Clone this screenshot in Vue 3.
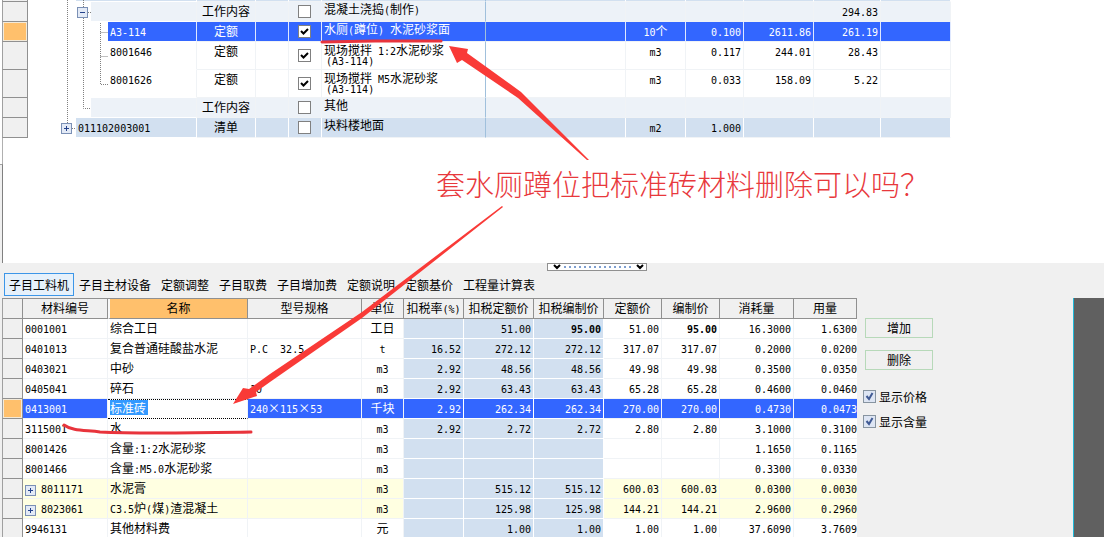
<script setup>
const upperRows = [
  { kind: 'work', indent: 'l2', code: '', type: '工作内容', checked: false, name: '混凝土浇捣(制作)', unit: '', qty: '', price: '', total: '294.83' },
  { kind: 'selected', indent: 'l3', code: 'A3-114', type: '定额', checked: true, name: '水厕(蹲位) 水泥砂浆面', unit: '10个', qty: '0.100', price: '2611.86', total: '261.19' },
  { kind: 'plain tall', indent: 'l3', code: '8001646', type: '定额', checked: true, name: '现场搅拌 1:2水泥砂浆', note: '(A3-114)', unit: 'm3', qty: '0.117', price: '244.01', total: '28.43' },
  { kind: 'plain tall', indent: 'l3', code: '8001626', type: '定额', checked: true, name: '现场搅拌 M5水泥砂浆', note: '(A3-114)', unit: 'm3', qty: '0.033', price: '158.09', total: '5.22' },
  { kind: 'work', indent: 'l2', code: '', type: '工作内容', checked: false, name: '其他', unit: '', qty: '', price: '', total: '' },
  { kind: 'list', indent: 'l1', code: '011102003001', type: '清单', checked: false, name: '块料楼地面', unit: 'm2', qty: '1.000', price: '', total: '' },
]

const tabs = ['子目工料机', '子目主材设备', '定额调整', '子目取费', '子目增加费', '定额说明', '定额基价', '工程量计算表']

const heads = ['材料编号', '名称', '型号规格', '单位', '扣税率(%)', '扣税定额价', '扣税编制价', '定额价', '编制价', '消耗量', '用量']

const lowerRows = [
  { v: ['0001001', '综合工日', '', '工日', '', '51.00', '95.00', '51.00', '95.00', '16.3000', '1.6300'], strong: true },
  { v: ['0401013', '复合普通硅酸盐水泥', 'P.C  32.5', 't', '16.52', '272.12', '272.12', '317.07', '317.07', '0.2000', '0.0200'] },
  { v: ['0403021', '中砂', '', 'm3', '2.92', '48.56', '48.56', '49.98', '49.98', '0.3500', '0.0350'] },
  { v: ['0405041', '碎石', '10', 'm3', '2.92', '63.43', '63.43', '65.28', '65.28', '0.4600', '0.0460'] },
  { v: ['0413001', '标准砖', '240×115×53', '千块', '2.92', '262.34', '262.34', '270.00', '270.00', '0.4730', '0.0473'], selected: true },
  { v: ['3115001', '水', '', 'm3', '2.92', '2.72', '2.72', '2.80', '2.80', '3.1000', '0.3100'] },
  { v: ['8001426', '含量:1:2水泥砂浆', '', 'm3', '', '', '', '', '', '1.1650', '0.1165'] },
  { v: ['8001466', '含量:M5.0水泥砂浆', '', 'm3', '', '', '', '', '', '0.3300', '0.0330'] },
  { v: ['8011171', '水泥膏', '', 'm3', '', '515.12', '515.12', '600.03', '600.03', '0.0300', '0.0030'], group: true },
  { v: ['8023061', 'C3.5炉(煤)渣混凝土', '', 'm3', '', '125.98', '125.98', '144.21', '144.21', '2.9600', '0.2960'], group: true },
  { v: ['9946131', '其他材料费', '', '元', '', '1.00', '1.00', '1.00', '1.00', '37.6090', '3.7609'] },
]

const alignment = (i) => (i < 3 ? 'left' : i === 3 ? 'center' : 'right')

// Splits a label into half-width and full-width runs so each gets its own size.
const runs = (text) =>
  (text.match(/[\x20-\x7e]+|[^\x20-\x7e]+/g) || []).map((s) => ({ s, half: /^[\x20-\x7e]/.test(s) }))
</script>

<template>
  <main class="app">
    <section class="upper">
      <table class="grid bill" aria-label="清单定额">
        <colgroup>
          <col class="b-gut" /><col class="b-code" /><col class="b-type" /><col class="b-gap" /><col class="b-tick" />
          <col class="b-name" /><col class="b-desc" /><col class="b-unit" /><col class="b-qty" /><col class="b-price" />
          <col class="b-total" /><col class="b-last" />
        </colgroup>
        <tbody>
          <tr class="sliver list">
            <td class="gutter"></td>
            <td class="tree l1"><div class="code"></div></td>
            <td v-for="n in 10" :key="n"></td>
          </tr>
          <tr v-for="(r, i) in upperRows" :key="i" :class="r.kind">
            <td class="gutter"><i></i></td>
            <td class="tree" :class="r.indent"><div class="code"><span class="h">{{ r.code }}</span></div></td>
            <td class="center">{{ r.type }}</td>
            <td></td>
            <td class="tick"><input type="checkbox" :checked="r.checked" :aria-label="'选用 ' + r.name" /></td>
            <td class="name">
              <span v-for="(p, k) in runs(r.name)" :key="k" :class="{ h: p.half }">{{ p.s }}</span>
              <div v-if="r.note" class="note h">{{ r.note }}</div>
            </td>
            <td></td>
            <td class="center"><span v-for="(p, k) in runs(r.unit)" :key="k" :class="{ h: p.half }">{{ p.s }}</span></td>
            <td class="right"><span class="h">{{ r.qty }}</span></td>
            <td class="right"><span class="h">{{ r.price }}</span></td>
            <td class="right"><span class="h">{{ r.total }}</span></td>
            <td></td>
          </tr>
        </tbody>
      </table>
      <div class="stub"></div>
      <div class="wall"></div>
      <svg class="branches" width="110" height="140" viewBox="0 0 110 140" aria-hidden="true">
        <g fill="none" stroke="#808080" stroke-dasharray="1 1">
          <path d="M67.5 0V123M83.5 0V7M83.5 18V108.500H91M88 12.500H91M100.500 23V84.500H108M100.500 32.500H108M100.500 56.500H108M72 128.500H76" />
        </g>
        <g transform="translate(77 7)">
          <rect x=".5" y=".5" width="10" height="10" fill="#e3eaf6" stroke="#7b90b5" />
          <path d="M3 5.500H8" stroke="#24428b" />
        </g>
        <g transform="translate(61 123)">
          <rect x=".5" y=".5" width="10" height="10" fill="#e3eaf6" stroke="#7b90b5" />
          <path d="M3 5.500H8M5.500 3V8" stroke="#24428b" />
        </g>
      </svg>
    </section>

    <section class="lower">
      <button class="splitter" type="button" aria-label="折叠面板">
        <svg width="98" height="6" viewBox="0 0 98 6" aria-hidden="true">
          <path d="M6 1l3 3 3-3M89 1l3 3 3-3" fill="none" stroke="#000" stroke-width="2" />
          <path d="M16 3H84" stroke="#7f9fd0" stroke-width="2" stroke-dasharray="2 3" />
        </svg>
      </button>
      <nav class="tabs">
        <button v-for="(t, i) in tabs" :key="t" type="button" :class="{ on: i === 0 }">{{ t }}</button>
      </nav>
      <div class="body">
        <table class="grid parts">
          <colgroup>
            <col class="p-gut" /><col class="p-code" /><col class="p-name" /><col class="p-spec" /><col class="p-unit" />
            <col class="p-rate" /><col class="p-tax" /><col class="p-tax" /><col class="p-price" /><col class="p-price" />
            <col class="p-use" /><col class="p-amt" />
          </colgroup>
          <thead>
            <tr>
              <th class="gutter"></th>
              <th v-for="(t, i) in heads" :key="t" :class="{ hot: i === 1 }">
                <span v-for="(p, k) in runs(t)" :key="k" :class="{ h: p.half }">{{ p.s }}</span>
              </th>
            </tr>
          </thead>
          <tbody>
            <tr v-for="r in lowerRows" :key="r.v[0]" :class="{ selected: r.selected, group: r.group }">
              <td class="gutter"><i></i></td>
              <td
                v-for="(c, i) in r.v"
                :key="i"
                :class="[alignment(i), { tax: i > 3 && i < 7, strong: r.strong && (i === 6 || i === 8), edit: r.selected && i === 1 }]"
              >
                <svg v-if="r.group && i === 0" class="plus" width="11" height="11" viewBox="0 0 11 11" aria-hidden="true">
                  <rect x=".5" y=".5" width="10" height="10" fill="#e3eaf6" stroke="#7b90b5" />
                  <path d="M3 5.500H8M5.500 3V8" stroke="#24428b" />
                </svg>
                <mark v-if="r.selected && i === 1">{{ c }}</mark>
                <template v-else><span v-for="(p, k) in runs(c)" :key="k" :class="{ h: p.half }">{{ p.s }}</span></template>
              </td>
            </tr>
          </tbody>
        </table>
        <aside class="side">
          <button type="button">增加</button>
          <button type="button">删除</button>
          <label><input type="checkbox" checked />显示价格</label>
          <label><input type="checkbox" checked />显示含量</label>
        </aside>
        <div class="rail"></div>
      </div>
    </section>

    <p class="question">套水厕蹲位把标准砖材料删除可以吗？</p>
    <svg class="marks" width="620" height="450" viewBox="0 0 620 450" aria-hidden="true">
      <g fill="#f93a37">
        <path d="M449 46L468 49L467 53L521 92L589 160L587 160L518 98L462 60L457 63Z" />
        <path d="M502 206L503 207L362 318L270 382L256 392L257 396L233 404L243 388L249 389L270 374L362 312Z" />
      </g>
      <g fill="none" stroke="#e8343c" stroke-linecap="round" stroke-linejoin="round">
        <path d="M322 42L375 41L441 41" stroke-width="3" />
        <path d="M64 425C72 431 85 430 100 432C140 434 190 433 251 432" stroke-width="3" />
      </g>
    </svg>
  </main>
</template>

<style>
body {
  margin: 0;
  overflow: hidden;
}
</style>

<style scoped>
* {
  box-sizing: border-box;
}
.app {
  position: relative;
  display: flex;
  flex-direction: column;
  height: 100vh;
  overflow: hidden;
  background: #fff;
  color: #000;
  font: 12px/16px "Noto Sans CJK SC", sans-serif;
}
button {
  font: inherit;
  color: inherit;
  padding: 0;
}
.h {
  font-family: "DejaVu Sans Mono", monospace;
  font-size: 10px;
  line-height: 10px;
  white-space: pre;
}
.upper {
  position: relative;
  display: flex;
  flex-direction: column;
  align-items: flex-start;
  flex: 0 0 263px;
}
.stub {
  height: 26px;
  margin-left: 2px;
  border-left: 1px solid #b0b0b0;
}
.wall {
  flex: 1;
  width: 3px;
  background: #f0f0f0;
  border-top: 1px solid #a0a0a0;
  border-right: 1px solid #808080;
}
.grid {
  table-layout: fixed;
  border-collapse: separate;
  border-spacing: 0;
  margin-left: 2px;
}
.grid td,
.grid th {
  padding: 0;
  height: 20px;
  border-right: 1px solid #f0f3f6;
  border-bottom: 1px solid #f0f3f6;
  white-space: nowrap;
  font-weight: 400;
  line-height: 17px;
  vertical-align: top;
}
.grid .gutter {
  background: #f0f0f0;
  border-left: 1px solid #a0a0a0;
  border-right: 1px solid #909090;
  border-bottom: 1px solid #909090;
}
.gutter i {
  display: block;
  height: 19px;
}
.selected .gutter i {
  background: #ffc06c;
  border: 1px solid #f3ead9;
}
.center {
  text-align: center;
}
.grid .right {
  text-align: right;
  padding-right: 2px;
}

.bill {
  width: 949px;
}
.b-gut { width: 26px; }
.b-code { width: 169px; }
.b-type { width: 59px; }
.b-gap { width: 33px; }
.b-tick { width: 33px; }
.b-name { width: 164px; }
.b-desc { width: 140px; }
.b-unit { width: 60px; }
.b-qty { width: 58px; }
.b-price { width: 70px; }
.b-total { width: 67px; }
.b-last { width: 70px; }
.bill .sliver td {
  height: 2px;
}
.bill .tall td {
  height: 28px;
}
.bill .code {
  height: 19px;
  padding-left: 2px;
}
.bill .sliver .code {
  height: 1px;
}
.bill .tall .code {
  height: 27px;
}
.l1 .code { margin-left: 48px; }
.l2 .code { margin-left: 63px; }
.l3 .code { margin-left: 80px; }
.bill .tree {
  border-bottom-color: #fff;
}
.work td,
.work .code {
  background: #edf2f8;
}
.list td,
.list .code {
  background: #d2e0f0;
}
.bill .list td {
  border-right-color: #fff;
}
.selected td,
.selected .code {
  background: #3366ff;
  color: #fff;
}
.bill .selected td {
  border-right-color: #dfe8ff;
}
.bill tr .tree {
  background: #fff;
}
.bill tr td:nth-child(6) {
  border-right-color: #a0c0dc;
}
.bill tr .gutter {
  border-right-color: #909090;
  background: #f0f0f0;
}
.tick input {
  appearance: none;
  display: block;
  width: 13px;
  height: 13px;
  margin: 3px 0 0 9px;
  border: 1px solid #808080;
  background: #fff;
}
.tall .tick input {
  margin-top: 7px;
}
.tick input:checked {
  background: #fff url("data:image/svg+xml,%3Csvg xmlns='http://www.w3.org/2000/svg' viewBox='0 0 11 11'%3E%3Cpath d='M2 5l2.500 2.500L9 3' fill='none' stroke='%23000' stroke-width='2'/%3E%3C/svg%3E");
}
.bill .name {
  padding-left: 2px;
  line-height: 14px;
}
.bill .tall .name {
  line-height: 15px;
}
.note {
  line-height: 10px;
  padding-left: 2px;
}

.lower {
  flex: 1;
  min-height: 0;
  display: flex;
  flex-direction: column;
  background: #f0f0f0;
}
.splitter {
  display: block;
  width: 100px;
  height: 8px;
  margin-left: 547px;
  border: 1px solid #909090;
  background: #fff;
}
.splitter svg {
  display: block;
}
.tabs {
  display: flex;
  padding: 2px 0 2px 4px;
}
.tabs button {
  height: 23px;
  padding: 0 5px;
  border: 0;
  background: none;
}
.tabs .on {
  padding: 0 4px;
  border: 1px solid #3c96e8;
  background: #e6f1fb;
}
.body {
  display: flex;
  flex: 1;
  min-height: 0;
  overflow: hidden;
  align-items: stretch;
}
.parts {
  width: 855px;
  flex: none;
  align-self: flex-start;
  background: #fff;
  border-top: 1px solid #909090;
}
.p-gut { width: 21px; }
.p-code { width: 85px; }
.p-name { width: 140px; }
.p-spec { width: 114px; }
.p-unit { width: 42px; }
.p-rate { width: 60px; }
.p-tax { width: 70px; }
.p-price { width: 58px; }
.p-use { width: 74px; }
.p-amt { width: 63px; }
.parts th {
  background: #f0f0f0;
  border-color: #909090;
}
.parts .hot {
  background: #ffc06c;
  border-left: 2px solid #f8f8f8;
}
.parts .left {
  padding-left: 2px;
}
.parts td:last-child {
  padding-right: 0;
  border-right: 0;
}
.parts .tax {
  background: #d2e0f0;
  border-color: #fff;
}
.group td {
  background: #ffffe1;
}
.parts .group .gutter {
  background: #f0f0f0;
}
.parts .selected td {
  background: #3366ff;
}
.parts .selected .gutter {
  background: #f0f0f0;
}
.parts .selected .edit {
  background: #fff;
  border-top: 1px dotted #000;
  border-bottom: 1px dotted #000;
}
mark {
  display: block;
  width: 38px;
  height: 15px;
  line-height: 15px;
  background: #3399ff;
  color: #fff;
}
.strong .h {
  font-weight: 700;
}
.plus {
  float: left;
  margin: 6px 5px 0 0;
}
.side {
  flex: 1;
  padding: 20px 0 0 6px;
  display: flex;
  flex-direction: column;
  align-items: flex-start;
}
.side button {
  width: 68px;
  height: 20px;
  margin: 0 0 12px 2px;
  border: 1px solid #b7d9b9;
  background: #f0f0f0;
}
.side label {
  display: flex;
  align-items: center;
  gap: 3px;
  height: 17px;
  margin-bottom: 8px;
}
.side button + label {
  margin-top: 6px;
}
.side input {
  appearance: none;
  width: 13px;
  height: 13px;
  margin: 0;
  border: 1px solid #8794a0;
  background: #dde5f3;
}
.side input:checked {
  background: #dde5f3 url("data:image/svg+xml,%3Csvg xmlns='http://www.w3.org/2000/svg' viewBox='0 0 11 11'%3E%3Cpath d='M2.500 5l2.500 3L8.500 2' fill='none' stroke='%23405a94' stroke-width='2'/%3E%3C/svg%3E");
}
.rail {
  width: 31px;
  background: #606060;
  border-left: 1px solid #20b8d8;
}
.question {
  position: absolute;
  left: 436px;
  top: 164px;
  margin: 0;
  font-size: 29px;
  line-height: 38px;
  font-weight: 300;
  color: #e8383c;
  white-space: nowrap;
}
.branches,
.marks {
  position: absolute;
  left: 0;
  top: 0;
  pointer-events: none;
}
</style>
